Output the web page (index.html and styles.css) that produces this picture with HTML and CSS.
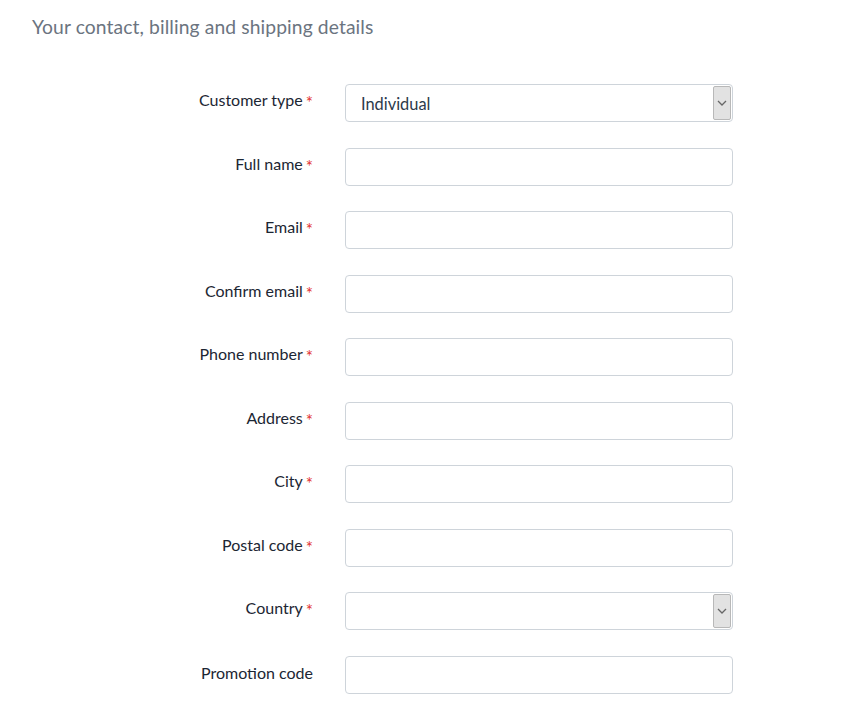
FILE: index.html
```html
<!DOCTYPE html>
<html>
<head>
<meta charset="utf-8">
<link rel="stylesheet" href="styles.css">
</head>
<body>
<h2 class="title">Your contact, billing and shipping details</h2>
<form class="form">
  <label class="label">Customer type<span class="req">*</span></label>
  <div class="select"><span class="select-value">Individual</span><span class="select-btn"><svg width="10" height="6" viewBox="0 0 10 6"><path d="M1 1l4 4 4-4" fill="none" stroke="#666" stroke-width="1.3"/></svg></span></div>

  <label class="label">Full name<span class="req">*</span></label>
  <input class="input" type="text">

  <label class="label">Email<span class="req">*</span></label>
  <input class="input" type="text">

  <label class="label">Confirm email<span class="req">*</span></label>
  <input class="input" type="text">

  <label class="label">Phone number<span class="req">*</span></label>
  <input class="input" type="text">

  <label class="label">Address<span class="req">*</span></label>
  <input class="input" type="text">

  <label class="label">City<span class="req">*</span></label>
  <input class="input" type="text">

  <label class="label">Postal code<span class="req">*</span></label>
  <input class="input" type="text">

  <label class="label">Country<span class="req">*</span></label>
  <div class="select"><span class="select-value"></span><span class="select-btn"><svg width="10" height="6" viewBox="0 0 10 6"><path d="M1 1l4 4 4-4" fill="none" stroke="#666" stroke-width="1.3"/></svg></span></div>

  <label class="label">Promotion code</label>
  <input class="input" type="text">
</form>
</body>
</html>
```
FILE: styles.css
```css
html, body {
  margin: 0;
  padding: 0;
  background: #fff;
}
body {
  font-family: "Lato", "Open Sans", sans-serif;
  color: #1f2937;
}
.title {
  margin: 0;
  padding: 15px 0 0 32px;
  height: 69px;
  box-sizing: border-box;
  font-size: 19.3px;
  font-weight: 400;
  color: #6b7480;
  letter-spacing: 0.1px;
}
.form {
  display: grid;
  grid-template-columns: 313px 388px;
  column-gap: 32px;
  row-gap: 25.56px;
  padding-top: 15px;
}
.label {
  justify-self: end;
  align-self: center;
  font-size: 16px;
  color: #1c2633;
  margin-top: -5px;
}
.req {
  color: #e3342f;
  margin-left: 3px;
  font-size: 17px;
  vertical-align: -3px;
  line-height: 1;
}
.input {
  height: 38px;
  box-sizing: border-box;
  border: 1px solid #ced4da;
  border-radius: 4px;
  padding: 0 15px;
  font: inherit;
  margin: 0;
}
.select {
  height: 38px;
  box-sizing: border-box;
  border: 1px solid #ced4da;
  border-radius: 4px;
  display: flex;
  align-items: stretch;
  justify-content: space-between;
  padding: 1px 1px 1px 0;
}
.select-value {
  padding-left: 15px;
  display: flex;
  align-items: center;
  font-size: 16.4px;
  color: #2c3a4a;
}
.select-btn {
  width: 16px;
  background: #e2e2e2;
  border: 1px solid #b8b8b8;
  border-radius: 2px;
  display: flex;
  align-items: center;
  justify-content: center;
}
```
